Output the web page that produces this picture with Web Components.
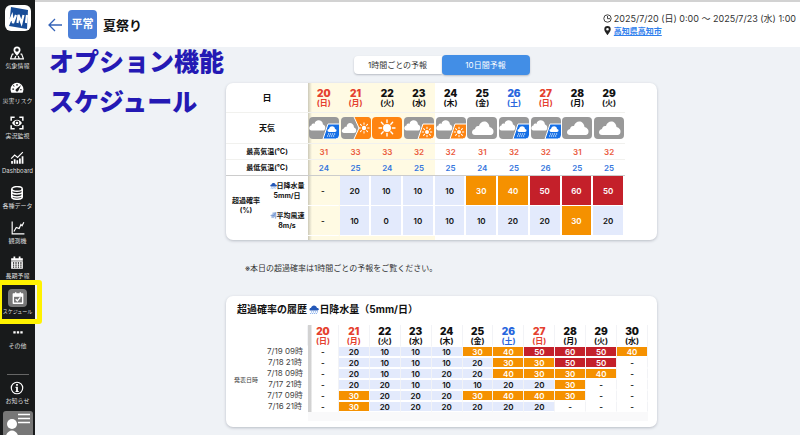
<!DOCTYPE html>
<html lang="ja">
<head>
<meta charset="utf-8">
<title>夏祭り</title>
<style>
body{margin:0;font-family:Inter,"Noto Sans CJK JP",sans-serif;color:#111;background:#eff2f6}
</style>
</head>
<body>
<app-page></app-page>
<script>
const define=(name,html,init)=>customElements.define(name,class extends HTMLElement{
  connectedCallback(){
    if(this.shadowRoot)return;
    const root=this.attachShadow({mode:'open'});
    const t=document.createElement('template');
    t.innerHTML=typeof html==='function'?html(this):html;
    root.append(t.content.cloneNode(true));
    if(init)init(this,root);
  }
});

/* Icons of the side bar, 24x24 */
const NAV={
 place:'<path fill="#fff" d="M12 1a6 6 0 0 0-6 6c0 4 6 10 6 10s6-6 6-10a6 6 0 0 0-6-6zm0 3a3 3 0 1 1 0 6 3 3 0 0 1 0-6z"/><path fill="none" stroke="#fff" stroke-width="2" d="M6 14H4L1 22h22l-3-8h-2M8 22l2-5M16 22l-2-5"/>',
 gauge:'<path fill="#fff" d="M12 3A11 11 0 0 0 1 14c0 2 .4 4 1.400 6h19.200c1-2 1.400-4 1.400-6A11 11 0 0 0 12 3z"/><path fill="#1a1a1a" d="M19 7l-5 10a2.500 2.500 0 1 1-4-3zM4 13h3v2H4zM6 7l2 2-1 1-2-2zM11 5h2v3h-2zM17 14h3v2h-3z"/>',
 scan:'<path fill="none" stroke="#fff" stroke-width="2.600" d="M2 8V2h6M16 2h6v6M22 16v6h-6M8 22H2v-6"/><path fill="#fff" d="M3.500 12C6 8 9 6.500 12 6.500S18 8 20.500 12C18 16 15 17.500 12 17.500S6 16 3.500 12z"/><circle cx="12" cy="12" r="3.200" fill="#fff" stroke="#1a1a1a" stroke-width="1.800"/>',
 chart:'<path fill="none" stroke="#fff" stroke-width="2" d="M2 13l6-6 5 4 9-9"/><path fill="#fff" d="M2 17h3v5H2zM6.500 14h3v8h-3zM11 16h3v6h-3zM15.500 13h3v9h-3zM20 9h3v13h-3z"/>',
 data:'<ellipse cx="12" cy="5" rx="9" ry="4" fill="none" stroke="#fff" stroke-width="2.400"/><path fill="none" stroke="#fff" stroke-width="2.600" d="M3 5v14c0 5 18 5 18 0V5M3 10c0 5 18 5 18 0M3 15c0 5 18 5 18 0"/>',
 line:'<path fill="none" stroke="#fff" stroke-width="2" d="M2 1v21h21M5 18l4-7 5 2 3-7 2 2 3-6"/>',
 cal:'<path fill="#fff" d="M2 4h4V1h3v3h6V1h3v3h4v18H2z"/><path stroke="#1a1a1a" stroke-width="2.200" stroke-dasharray="2.200 2" d="M5 12h15M5 15.500h15M5 19h15"/><path stroke="#1a1a1a" d="M2 8.500h20"/>',
 check:'<path fill="none" stroke="#fff" stroke-width="2.400" stroke-linejoin="round" d="M4 5h16v16H4zM8 2v3M16 2v3M8 14l3 3 5-6"/><path fill="#fff" d="M4 5h16v5H4z"/>',
 dots:'<path fill="#fff" d="M4 9h4v4H4zM10 9h4v4h-4zM16 9h4v4h-4z"/>',
 info:'<circle cx="12" cy="12" r="9.800" fill="none" stroke="#fff" stroke-width="2"/><path fill="#fff" d="M10.500 5h3v3h-3zM9.500 10h4v7H15v2H9.500v-2h1v-5h-1z"/>'
};
define('nav-item',el=>`<style>
:host{display:block}
a{display:flex;flex-direction:column;align-items:center;color:#ddd;text-decoration:none;font-size:${el.getAttribute('size')||6}px;line-height:10px;white-space:nowrap}
.i{height:16px;width:19px;display:flex;align-items:center;justify-content:center;border-radius:4px}
:host([active]) .i{background:#777;height:18px;margin:-1px 0}
svg{width:14px;height:14px}
</style><a href="#"><span class="i"><svg viewBox="0 0 24 24" aria-hidden="true">${NAV[el.getAttribute('icon')]}</svg></span><span><slot></slot></span></a>`);

define('side-nav',`<style>
:host{display:block;background:#181a1b;height:100vh;overflow:hidden}
nav{display:flex;flex-direction:column;gap:9px;padding-top:5px;align-items:center}
.logo{width:26px;height:26px;margin-bottom:5px;display:block}
hr{width:22px;border:0;border-top:1px solid #666;margin:14px 0 -4px}
.user{width:30px;height:30px;margin-top:-4px;padding:0;border:0;background:none}
</style><nav aria-label="メニュー">
<svg class="logo" viewBox="0 0 26 26" role="img" aria-label="WNI"><rect width="26" height="26" rx="6" fill="#fff"/><path fill="#174c97" d="M6 2l17 3-1 19-18-3z"/><path fill="none" stroke="#fff" stroke-width="2.200" d="M2 10l2 8 3-7 1 7 3-8M12.500 18l1-8 3 8 2-8M22 10l-1 8"/></svg>
<nav-item icon="place">気象情報</nav-item><nav-item icon="gauge">災害リスク</nav-item><nav-item icon="scan">実況監視</nav-item><nav-item icon="chart">Dashboard</nav-item><nav-item icon="data">各種データ</nav-item><nav-item icon="line">観測機</nav-item><nav-item icon="cal">長期予報</nav-item><nav-item icon="check" size="5" active>スケジュール</nav-item><nav-item icon="dots">その他</nav-item>
<hr><nav-item icon="info">お知らせ</nav-item>
<button class="user" aria-label="ユーザー"><svg width="30" height="30" viewBox="0 0 30 30"><rect width="30" height="30" rx="3" fill="#777"/><circle cx="9" cy="13" r="5" fill="#fff"/><path fill="#fff" d="M2 30c0-14 14-14 14 0z"/><path stroke="#fff" stroke-width="1.500" d="M15 3.500h12M15 7.500h12M15 11.500h12"/></svg></button>
</nav>`);

define('page-header',`<style>
:host{display:flex;align-items:center;background:#fff;border-top:2px solid #d2d2d2;height:45px;padding:0 4px 0 13px}
.back{border:0;background:none;padding:0;width:14px;height:14px;margin-right:6px}
svg{display:block}
.badge{background:#4b7fd8;color:#fff;border-radius:4px;font-size:11px;font-weight:700;line-height:29px;width:29px;text-align:center;white-space:nowrap}
h1{font-size:13px;line-height:20px;margin:0 auto 0 6px;font-weight:700}
.meta{font-size:9px;line-height:12px;color:#333;white-space:nowrap}
.meta div{display:flex;align-items:center;gap:2px}
a{font-size:8px;font-weight:700;color:#2f80ed}
</style>
<button class="back" aria-label="戻る"><svg viewBox="0 0 14 14" fill="none" stroke="#3463b8" stroke-width="1.300"><path d="M14 7H1M7 1L1 7l6 6"/></svg></button>
<span class="badge">平常</span><h1>夏祭り</h1>
<div class="meta"><div><svg width="9" height="9" viewBox="0 0 9 9" fill="none" stroke="#444"><circle cx="4.500" cy="4.500" r="3.700"/><path d="M4.500 2v2.700H7"/></svg>2025/7/20 (日) 0:00 ～ 2025/7/23 (水) 1:00</div>
<div><svg width="9" height="9" viewBox="0 0 9 9"><path fill="#222" fill-rule="evenodd" d="M4.500 0A3.200 3.200 0 0 0 1.300 3.200C1.300 5.500 4.500 9 4.500 9s3.200-3.500 3.200-5.800A3.200 3.200 0 0 0 4.500 0zm0 2a1.300 1.300 0 1 1 0 2.600 1.300 1.300 0 0 1 0-2.600z"/></svg><a href="#">高知県高知市</a></div></div>`);

/* Weather marks, 30x22 */
const BIG='<path fill="#fff" d="M8 18c-4 0-4-5 0-6C8.500 9.500 10 8.500 12 9 13.500 2.500 22 3 22.500 10c3 1 4 2.500 4 4.500s-1 3.500-3 3.500z"/>';
const MINI='<path fill="#fff" d="M2.500 13.500c-3 0-3-4.500 0-5C2.500 7 4 6 5.500 7 6 2 13.500 2 14 7.500c3 1 3 6 0 6z"/>';
const sun=(x,y,r,l,w)=>`<circle cx="${x}" cy="${y}" r="${r}" fill="#fff"/><g stroke="#fff" stroke-width="${w}" stroke-linecap="round">${[0,45,90,135,180,225,270,315].map(a=>`<path transform="rotate(${a} ${x} ${y})" d="M${x} ${y-r-1.4}v-${l}"/>`).join('')}</g>`;
const WX={
 cloud:'<rect width="30" height="22" rx="4" fill="#999"/>'+BIG,
 sun:'<rect width="30" height="22" rx="4" fill="#ff8410"/>'+sun(15,11,4,2.600,1.400),
 cloudsun:'<rect width="30" height="22" rx="4" fill="#999"/>'+MINI+'<path fill="#ff8410" stroke="#fff" d="M19 7h11.500v11q0 4-4 4H14z"/>'+sun(23,15,2,1.400,1),
 tosun:'<rect width="30" height="22" rx="4" fill="#999"/><path fill="#fff" d="M3 16c-3 0-3-4 0-4.500C3 10 5 9.500 5.500 10 6 4 13 5.500 13 10.500c3 1 3 5.500 0 5.500z"/><path fill="#ff8410" d="M13 0h13q4 0 4 4v14q0 4-4 4H13l5-11z"/><path fill="none" stroke="#fff" d="M13 0l5 11-5 11"/>'+sun(23,11,2.200,1.500,1),
 cloudrain:'<rect width="30" height="22" rx="4" fill="#999"/>'+MINI+'<path fill="#156fe6" stroke="#fff" d="M19 7h11.500v11q0 4-4 4H14z"/><path fill="#fff" d="M20 15c-2 0-2-3 0-3 1-4 6-3 6 0 2 0 2 3 0 3z"/><path stroke="#fff" stroke-width="1.200" stroke-dasharray="1.200 .8" d="M19 17h8M18 19h8"/>'
};
define('weather-mark',el=>`<style>:host{display:block}svg{display:block;margin:auto;width:30px;height:22px}</style><svg viewBox="0 0 30 22" aria-hidden="true">${WX[el.getAttribute('kind')]}</svg>`);
define('rain-mark',`<style>:host{display:inline-block;width:1em;height:1em;vertical-align:-1px}svg{display:block;width:100%;height:100%}</style><svg viewBox="0 0 10 10"><path fill="#2458b8" d="M1.500 6.500C0 6.500 0 4 2 4c.5-3.500 5.500-3.500 6 0 2.500 0 2.500 2.500 0 2.500z"/><path stroke="#8db4ee" stroke-width="1.200" stroke-dasharray="1.200 .8" d="M2 7.800h7M1 9.500h7"/></svg>`);
define('wind-mark',`<style>:host{display:inline-block;width:1em;height:1em;vertical-align:-1px}svg{display:block;width:100%;height:100%}</style><svg viewBox="0 0 10 10"><path fill="#9db7e2" d="M3 1l6-1v9l-2 1V7H1l3-2H0l4-2z"/><path stroke="#5c82c4" stroke-width=".8" fill="none" d="M1 5h5l2-4M2 8h4"/></svg>`);

define('view-tabs',`<style>
:host{display:flex;justify-content:center;align-items:center}
button{font:inherit;font-size:8px;line-height:18px;width:88px;padding:0;border:0;background:#fff;color:#333;box-shadow:0 1px 2px #b8bcc4;border-radius:4px 0 0 4px;white-space:nowrap}
button[aria-pressed=true]{background:#428ee6;color:#fff;line-height:20px;border-radius:4px}
</style><button aria-pressed="false">1時間ごとの予報</button><button aria-pressed="true">10日間予報</button>`);

define('info-card',`<style>:host{display:block;background:#fff;border-radius:7px;box-shadow:0 1px 3px #b9bdc5;overflow:hidden}</style><slot></slot>`);

const TABLE=`
:host{display:block}
table{width:100%;table-layout:fixed;border-collapse:separate;border-spacing:0;text-align:center}
th,td{padding:0;box-sizing:border-box;white-space:nowrap}
col.a{width:40px}col.b{width:42px}
td{font-size:8px;font-weight:600;line-height:8px}
.day{font-size:8px;line-height:9px;font-weight:700}
.day b,.day span{display:block}
.day b{font-size:10px;line-height:11px}
.sun{color:#e5412f}.sat{color:#2866dd}
.low{background:#e3eafc}.mid{background:#f59100;color:#fff}.high{background:#c4202a;color:#fff}
`;
const NAMES='日月火水木金土';
const day=d=>`<b>${d}</b><span>(${NAMES[(d-20)%7]})</span>`;
const tone=d=>[20,21,27].includes(d)?'sun':d===26?'sat':'';
const level=v=>v==='-'?'':v>=50?'high':v>=30?'mid':'low';
const cols=n=>'<colgroup><col class="a"><col class="b">'+'<col>'.repeat(n)+'</colgroup>';

define('forecast-table',()=>{
 const D=[20,21,22,23,24,25,26,27,28,29];
 const row=(vals,f)=>vals.map((v,i)=>f(v,(i<4?'near ':'')+(i?'':'first '))).join('');
 const p=a=>row(a,(v,c)=>`<td class="${c}p ${level(v)}">${v}</td>`);
 const t=(a,k)=>row(a,(v,c)=>`<td class="${c}${k}">${v}</td>`);
 return `<style>${TABLE}
:host{padding-right:32px}
th{font-size:7px;line-height:10px}
tr>*{border-bottom:1px solid #f1f1ee}
.near:not(.low){background-color:#fffae3}
.first{background-image:linear-gradient(to right,#ccc9b8,transparent 4px)}
.d{height:30px}.w{height:31px}.t{height:16px}.q{height:30px}.e{height:4px}
.d th:first-child{font-size:9px}.w th{font-size:8px}
.l>*{border-bottom-color:#ccc}
.max{color:#ea5a3d}.min{color:#3576dd}
.p{border-right:2px solid #fff;border-bottom-color:#fff}
.first.p{border-right-color:#fffae3}
.q th,.e>*{border-bottom:0}
</style><table>${cols(10)}
<thead><tr class="d"><th colspan="2">日</th>${row(D,(v,c)=>`<th class="day ${c}${tone(v)}">${day(v)}</th>`)}</tr></thead>
<tbody><tr class="w"><th colspan="2">天気</th>${row(['cloudrain','tosun','sun','cloudsun','cloudsun','cloud','cloudrain','cloudrain','cloud','cloud'],(v,c)=>`<td class="${c}"><weather-mark kind="${v}"></weather-mark></td>`)}</tr>
<tr class="t"><th colspan="2">最高気温(℃)</th>${t([31,33,33,32,32,31,32,32,31,32],'max')}</tr>
<tr class="t l"><th colspan="2">最低気温(℃)</th>${t([24,25,24,25,25,24,25,26,25,25],'min')}</tr>
<tr class="q"><th rowspan="2">超過確率<br>(%)</th><th><rain-mark></rain-mark>日降水量<br>5mm/日</th>${p(['-',20,10,10,10,30,40,50,60,50])}</tr>
<tr class="q"><th><wind-mark></wind-mark>平均風速<br>8m/s</th>${p(['-',10,0,10,10,10,20,20,30,20])}</tr>
<tr class="e" aria-hidden="true"><td colspan="2"></td>${row(D,(v,c)=>`<td class="${c}"></td>`)}</tr></tbody></table>`;
});

define('history-table',()=>{
 const D=[20,21,22,23,24,25,26,27,28,29,30];
 const R=[['7/19 09時','- 20 10 10 10 30 40 50 60 50 40'],['7/18 21時','- 20 10 10 10 20 30 30 50 50 -'],['7/18 09時','- 20 10 10 20 20 40 30 30 40 -'],['7/17 21時','- 20 20 10 10 10 20 20 30 - -'],['7/17 09時','- 30 20 20 20 30 40 40 30 - -'],['7/16 21時','- 30 20 20 20 20 20 20 - - -']];
 return `<style>${TABLE}
:host{padding:0 9px 6px 0}
thead tr{height:21px}tbody tr{height:11px}
.day,td{border-right:1px solid #f2f3f6}
td{border-bottom:1px solid #fff;border-top:1px solid #fff}
th{font-weight:400;font-size:8px;line-height:9px;color:#444}
tbody th:last-of-type{padding-right:4px}
th[rowspan]{font-size:6px}
.day{font-weight:700;color:#111}
.day.sun{color:#e5412f}.day.sat{color:#2866dd}
.first{background-image:linear-gradient(to right,#d2d2d2 3px,transparent 4px)}
td.first{border-top:0;border-bottom:0}
tfoot td{height:9px;background:#f9f9fa;border:0}tfoot td:first-child{background:none}
</style><table>${cols(11)}
<thead><tr><td colspan="2"></td>${D.map((d,i)=>`<th class="day ${i?'':'first '}${tone(d)}">${day(d)}</th>`).join('')}</tr></thead>
<tbody>${R.map((r,i)=>`<tr>${i?'':'<th rowspan="6">発表日時</th>'}<th>${r[0]}</th>${r[1].split(' ').map((v,j)=>`<td class="${j?'':'first '}${level(v)}">${v}</td>`).join('')}</tr>`).join('')}</tbody>
<tfoot aria-hidden="true"><tr><td colspan="2"></td><td colspan="11"></td></tr></tfoot></table>`;
});

define('app-page',`<style>
:host{display:grid;grid-template-columns:35px minmax(0,1fr);height:100vh;position:relative;overflow:hidden}
main{display:grid;grid-template-columns:191fr 431fr 143fr}
.titles p{margin:0 0 10px;padding-left:14px;font-size:25px;line-height:30px;font-weight:900;color:#2419b4;white-space:nowrap}
view-tabs{margin:8px 0}
.note{margin:23px 0 23px 19px;font-size:8px;line-height:10px;color:#333}
h2{font-size:10px;line-height:14px;margin:0;padding:6px 11px 9px;font-weight:700}
.mark{position:absolute;left:-3px;top:280px;width:35px;height:34px;border:5px solid #fff200;border-radius:3px;pointer-events:none}
</style>
<side-nav></side-nav>
<div><page-header></page-header>
<main><div class="titles"><p>オプション機能</p><p>スケジュール</p></div>
<section><view-tabs></view-tabs>
<info-card><forecast-table></forecast-table></info-card>
<p class="note">※本日の超過確率は1時間ごとの予報をご覧ください。</p>
<info-card><h2>超過確率の履歴 <rain-mark></rain-mark>日降水量（5mm/日）</h2><history-table></history-table></info-card>
</section></main></div>
<div class="mark"></div>`);
</script>
</body>
</html>
